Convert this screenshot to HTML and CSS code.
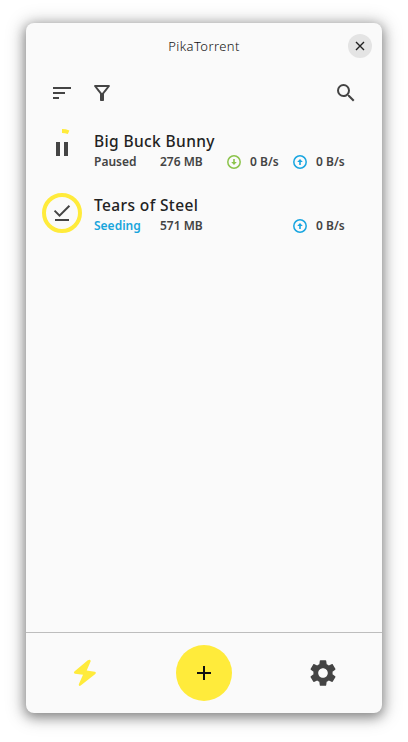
FILE: index.html
```html
<!DOCTYPE html>
<html lang="en">
<head>
    <meta charset="utf-8">
    <title>PikaTorrent</title>
    <link rel="stylesheet" href="styles.css">
</head>
<body>
    <div class="window">
        <header class="titlebar">
            <h1 class="title">PikaTorrent</h1>
            <button class="close-button" aria-label="Close">
                <svg width="10" height="10" viewBox="0 0 10 10"><path d="M1 1l8 8M9 1l-8 8" fill="none" stroke="#222" stroke-width="1.4"/></svg>
            </button>
        </header>

        <div class="toolbar">
            <svg class="icon" viewBox="0 0 24 24"><path d="M3 18h6v-2H3v2zM3 6v2h18V6H3zm0 7h12v-2H3v2z"/></svg>
            <svg class="icon" viewBox="0 0 24 24"><path d="M7 6h10l-5.01 6.3L7 6zM4.25 5.61C6.27 8.2 10 13 10 13v6c0 .55.45 1 1 1h2c.55 0 1-.45 1-1v-6s3.72-4.8 5.74-7.39C20.25 4.95 19.78 4 18.95 4H5.04c-.83 0-1.3.95-.79 1.61z"/></svg>
            <svg class="icon search" viewBox="0 0 24 24"><path d="M15.5 14h-.79l-.28-.27A6.47 6.47 0 0 0 16 9.5 6.5 6.5 0 1 0 9.5 16c1.61 0 3.09-.59 4.23-1.57l.27.28v.79l5 4.99L20.49 19l-4.99-5zm-6 0C7.01 14 5 11.99 5 9.5S7.01 5 9.5 5 14 7.01 14 9.5 11.99 14 9.5 14z"/></svg>
        </div>

        <main class="torrents">
            <div class="torrent">
                <svg class="progress" viewBox="0 0 40 40">
                    <path class="ring" d="M20 2A18 18 0 0 1 26.6 3.25"/>
                    <path d="M14 27h4V13h-4v14zm8-14v14h4V13h-4z"/>
                </svg>
                <div class="info">
                    <div class="name">Big Buck Bunny</div>
                    <div class="stats">
                        <span class="status">Paused</span>
                        <span class="size">276 MB</span>
                        <span class="speed">
                            <svg class="arrow down" viewBox="0 0 16 16"><circle cx="8" cy="8" r="6.2"/><path d="M7.2 5h1.6v3h2L8 11 5.2 8h2z"/></svg>
                            <span>0 B/s</span>
                        </span>
                        <span class="speed">
                            <svg class="arrow up" viewBox="0 0 16 16"><circle cx="8" cy="8" r="6.2"/><path d="M7.2 5h1.6v3h2L8 11 5.2 8h2z"/></svg>
                            <span>0 B/s</span>
                        </span>
                    </div>
                </div>
            </div>
            <div class="torrent">
                <svg class="progress" viewBox="0 0 40 40">
                    <circle class="ring" cx="20" cy="20" r="18"/>
                    <path d="M28.13 13.41L26.72 12l-9.19 9.19-4.25-4.25-1.41 1.41 5.66 5.66zM13 26h14v2H13z"/>
                </svg>
                <div class="info">
                    <div class="name">Tears of Steel</div>
                    <div class="stats">
                        <span class="status seeding">Seeding</span>
                        <span class="size">571 MB</span>
                        <span class="speed"></span>
                        <span class="speed">
                            <svg class="arrow up" viewBox="0 0 16 16"><circle cx="8" cy="8" r="6.2"/><path d="M7.2 5h1.6v3h2L8 11 5.2 8h2z"/></svg>
                            <span>0 B/s</span>
                        </span>
                    </div>
                </div>
            </div>
        </main>

        <nav class="bottom-bar">
            <div class="tab">
                <svg class="bolt" viewBox="0 0 32 32"><path d="M18.8 3.2L5.4 14.6q-1.3 1.6.6 2.1l8 1-4.2 9.6q-.2 2.4 1.9 1.3L26.3 17q1.3-1.7-.6-2.2l-8-1.2 4-9.4q.1-2.4-2.9-1z"/></svg>
            </div>
            <div class="tab">
                <button class="add-button" aria-label="Add torrent">
                    <svg width="24" height="24" viewBox="0 0 24 24"><path d="M19 13h-6v6h-2v-6H5v-2h6V5h2v6h6v2z"/></svg>
                </button>
            </div>
            <div class="tab">
                <svg class="gear" viewBox="0 0 24 24"><path d="M19.14 12.94c.04-.3.06-.61.06-.94 0-.32-.02-.64-.07-.94l2.03-1.58c.18-.14.23-.41.12-.61l-1.92-3.32c-.12-.22-.37-.29-.59-.22l-2.39.96c-.5-.38-1.03-.7-1.62-.94L14.4 2.81c-.04-.24-.24-.41-.48-.41h-3.84c-.24 0-.43.17-.47.41L9.25 5.35c-.59.24-1.13.57-1.62.94L5.24 5.33c-.22-.08-.47 0-.59.22L2.74 8.87c-.12.21-.08.47.12.61l2.03 1.58c-.05.3-.09.63-.09.94s.02.64.07.94l-2.03 1.58c-.18.14-.23.41-.12.61l1.92 3.32c.12.22.37.29.59.22l2.39-.96c.5.38 1.03.7 1.62.94l.36 2.54c.05.24.24.41.48.41h3.84c.24 0 .44-.17.47-.41l.36-2.54c.59-.24 1.13-.56 1.62-.94l2.39.96c.22.08.47 0 .59-.22l1.92-3.32c.12-.22.07-.47-.12-.61l-2.01-1.58zM12 15.6c-1.98 0-3.6-1.62-3.6-3.6s1.62-3.6 3.6-3.6 3.6 1.62 3.6 3.6-1.62 3.6-3.6 3.6z"/></svg>
            </div>
        </nav>
    </div>
</body>
</html>
```
FILE: styles.css
```css
* {
    box-sizing: border-box;
}
body {
    margin: 0;
    height: 742px;
    padding: 23px 26px 29px;
    overflow: hidden;
    background-color: #fff;
    font-family: "Noto Sans", "Open Sans", sans-serif;
    color: #222;
}
svg {
    display: block;
    fill: #444;
}
button {
    display: flex;
    align-items: center;
    justify-content: center;
    border: none;
    padding: 0;
    border-radius: 50%;
    cursor: pointer;
}
.window {
    display: flex;
    flex-direction: column;
    height: 690px;
    border-radius: 8px;
    background-color: #fafafa;
    box-shadow: 0 3px 12px 1px rgba(0, 0, 0, 0.4), 0 2px 18px 5px rgba(0, 0, 0, 0.15);
}
.titlebar {
    display: grid;
    grid-template-columns: 24px 1fr 24px;
    align-items: center;
    height: 46px;
    padding: 0 10px;
}
.title {
    grid-column: 2;
    margin: 0;
    text-align: center;
    font-size: 13px;
    font-weight: 300;
    letter-spacing: 0.4px;
    color: #111;
}
.close-button {
    width: 24px;
    height: 24px;
    background-color: #e4e4e4;
}
.toolbar {
    display: flex;
    align-items: center;
    gap: 16px;
    height: 48px;
    padding: 0 24px;
}
.icon {
    width: 24px;
    height: 24px;
}
.search {
    margin-left: auto;
}
.torrents {
    flex: 1;
}
.torrent {
    display: flex;
    align-items: center;
    gap: 12px;
    height: 64px;
    padding: 0 16px;
}
.progress {
    width: 40px;
    height: 40px;
}
.ring {
    fill: none;
    stroke: #ffeb3b;
    stroke-width: 4;
}
.info {
    padding-top: 5px;
}
.name {
    margin-bottom: 2px;
    font-size: 15.5px;
    font-weight: 500;
    letter-spacing: 0.38px;
    line-height: 18px;
}
.stats {
    display: grid;
    grid-template-columns: 66px 66px 66px 66px;
    align-items: center;
    height: 20px;
    font-size: 12px;
    font-weight: 600;
    line-height: 16px;
    color: #444;
}
.seeding {
    color: #18a5dc;
}
.speed {
    display: flex;
    align-items: center;
    gap: 8px;
}
.arrow {
    width: 16px;
    height: 16px;
}
.arrow circle {
    fill: none;
    stroke-width: 1.5;
}
.down {
    fill: #8bc34a;
    stroke: #8bc34a;
    stroke-width: 0;
}
.up {
    fill: #18a5e0;
    stroke: #18a5e0;
    stroke-width: 0;
    transform: rotate(180deg);
}
.bottom-bar {
    display: grid;
    grid-template-columns: repeat(3, 1fr);
    height: 81px;
    border-top: 1px solid #bdbdbd;
}
.tab {
    display: flex;
    align-items: center;
    justify-content: center;
}
.bolt {
    width: 32px;
    height: 32px;
    fill: #ffeb3b;
}
.add-button {
    width: 56px;
    height: 56px;
    background-color: #ffeb3b;
}
.add-button svg {
    fill: #111;
}
.gear {
    width: 32px;
    height: 32px;
}
```
